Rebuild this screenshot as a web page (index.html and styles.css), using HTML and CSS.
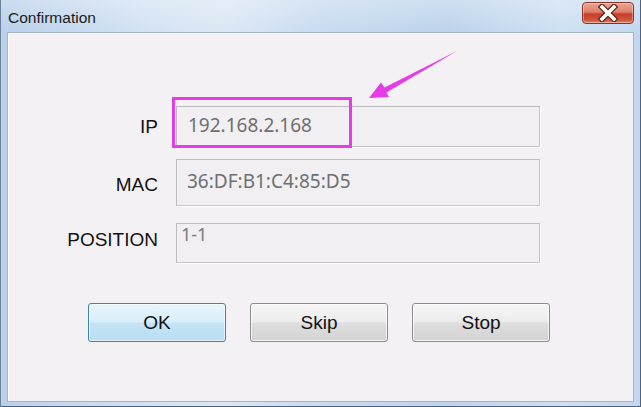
FILE: index.html
```html
<!DOCTYPE html>
<html>
<head>
<meta charset="utf-8">
<link rel="stylesheet" href="styles.css">
</head>
<body>
<div class="window">
  <div class="titlebar">
    <span class="title">Confirmation</span>
    <button class="close" aria-label="Close">
      <svg width="22" height="18" viewBox="0 0 22 18">
        <path d="M5 3 L17 15 M17 3 L5 15" stroke="#5e1f15" stroke-width="6" stroke-linecap="square" fill="none"/>
        <path d="M5 3 L17 15 M17 3 L5 15" stroke="#ffffff" stroke-width="3.6" stroke-linecap="square" fill="none"/>
      </svg>
    </button>
  </div>
  <div class="client">
    <div class="form">
      <div class="row row-ip">
        <div class="label">IP</div>
        <div class="field">192.168.2.168</div>
      </div>
      <div class="row row-mac">
        <div class="label">MAC</div>
        <div class="field">36:DF:B1:C4:85:D5</div>
      </div>
      <div class="row row-pos">
        <div class="label">POSITION</div>
        <div class="field">1-1</div>
      </div>
    </div>
    <div class="buttons">
      <button class="btn btn-default">OK</button>
      <button class="btn">Skip</button>
      <button class="btn">Stop</button>
    </div>
  </div>
  <svg class="annotation" width="641" height="407" viewBox="0 0 641 407">
    <rect x="173.5" y="98.5" width="177" height="48" fill="none" stroke="#e63ce8" stroke-width="3"/>
    <polygon points="369,98 381,82.5 384.5,87.5 457,51 386.5,92.5 389,97" fill="#e63ce8"/>
  </svg>
</div>
</body>
</html>
```

FILE: styles.css
```css
html, body {
  margin: 0;
  padding: 0;
  background: #c4d8ee;
}

.window {
  position: relative;
  width: 641px;
  height: 407px;
  box-sizing: border-box;
  display: flex;
  flex-direction: column;
  padding: 0 6px 4px 6px;
  border-left: 1px solid #6d8099;
  border-right: 1px solid #4f627a;
  border-bottom: 1px solid #4f627a;
  background:
    linear-gradient(to bottom, rgba(255,255,255,0.28), rgba(255,255,255,0) 32px),
    linear-gradient(to right, #b9d0ea 0%, #d2e2f3 22%, #dbe7f5 35%, #c8dbf0 50%, #bcd3ec 70%, #cfe0f3 88%, #c2d7ee 100%);
  font-family: "Liberation Sans", Arial, sans-serif;
}

.titlebar {
  height: 32px;
  display: flex;
  align-items: flex-start;
  flex-shrink: 0;
}

.title {
  margin-top: 9px;
  margin-left: 1px;
  font-size: 15.5px;
  line-height: 18px;
  color: #1b1b1b;
}

.close {
  margin-left: auto;
  margin-top: 2px;
  width: 52px;
  height: 22px;
  padding: 0;
  border: 1px solid #8a3426;
  border-radius: 4px;
  background: linear-gradient(to bottom, #eaa494 0%, #dd806c 45%, #c4402a 55%, #cf553c 85%, #e48a6d 100%);
  display: flex;
  align-items: center;
  justify-content: center;
  box-shadow: inset 0 0 0 1px rgba(255,255,255,0.35);
}

.client {
  flex: 1;
  border: 1px solid #9fb4cc;
  background: #f3f1f4;
  display: flex;
  flex-direction: column;
  padding-top: 73px;
  box-shadow: inset 1px 1px 0 #ffffff;
}

.form {
  display: flex;
  flex-direction: column;
}

.row {
  display: flex;
  align-items: flex-start;
  gap: 18px;
}

.label {
  width: 150px;
  text-align: right;
  font-size: 19px;
  line-height: 20px;
  color: #121212;
}

.field {
  width: 364px;
  box-sizing: border-box;
  border: 1px solid #bcbcbc;
  border-right-color: #c6c6c6;
  border-bottom-color: #c6c6c6;
  background: #f1eff2;
  box-shadow: 1px 1px 0 #ffffff;
  font-family: "Noto Sans", "Open Sans", sans-serif;
  font-size: 19px;
  line-height: 20px;
  color: #6f6f6f;
}

.row-ip { height: 41px; margin-bottom: 12px; }
.row-ip .label { margin-top: 11px; }
.row-ip .field { height: 41px; padding: 8px 0 0 11px; }

.row-mac { height: 47px; margin-bottom: 17px; }
.row-mac .label { margin-top: 16px; }
.row-mac .field { height: 47px; padding: 11px 0 0 10px; }

.row-pos { height: 40px; }
.row-pos .label { margin-top: 7px; }
.row-pos .field { height: 40px; padding: 0 0 0 4px; font-size: 18px; color: #7c7c7c; }

.buttons {
  display: flex;
  gap: 24px;
  margin-top: 40px;
  padding-left: 80px;
}

.btn {
  width: 138px;
  height: 39px;
  box-sizing: border-box;
  border: 1px solid #8e8e8e;
  border-radius: 3px;
  background: linear-gradient(to bottom, #f6f6f6 0%, #ececec 48%, #dedede 52%, #d3d3d3 100%);
  box-shadow: inset 0 0 0 1px rgba(255,255,255,0.7);
  font-family: "Liberation Sans", Arial, sans-serif;
  font-size: 19px;
  color: #111111;
  padding: 0;
}

.btn-default {
  border-color: #3f83a8;
  background: linear-gradient(to bottom, #e8f5fc 0%, #d9eefa 48%, #c3e4f6 52%, #b9dff3 100%);
  box-shadow: inset 0 0 0 1px rgba(255,255,255,0.6);
}

.annotation {
  position: absolute;
  left: -1px;
  top: 0;
  pointer-events: none;
}
```
